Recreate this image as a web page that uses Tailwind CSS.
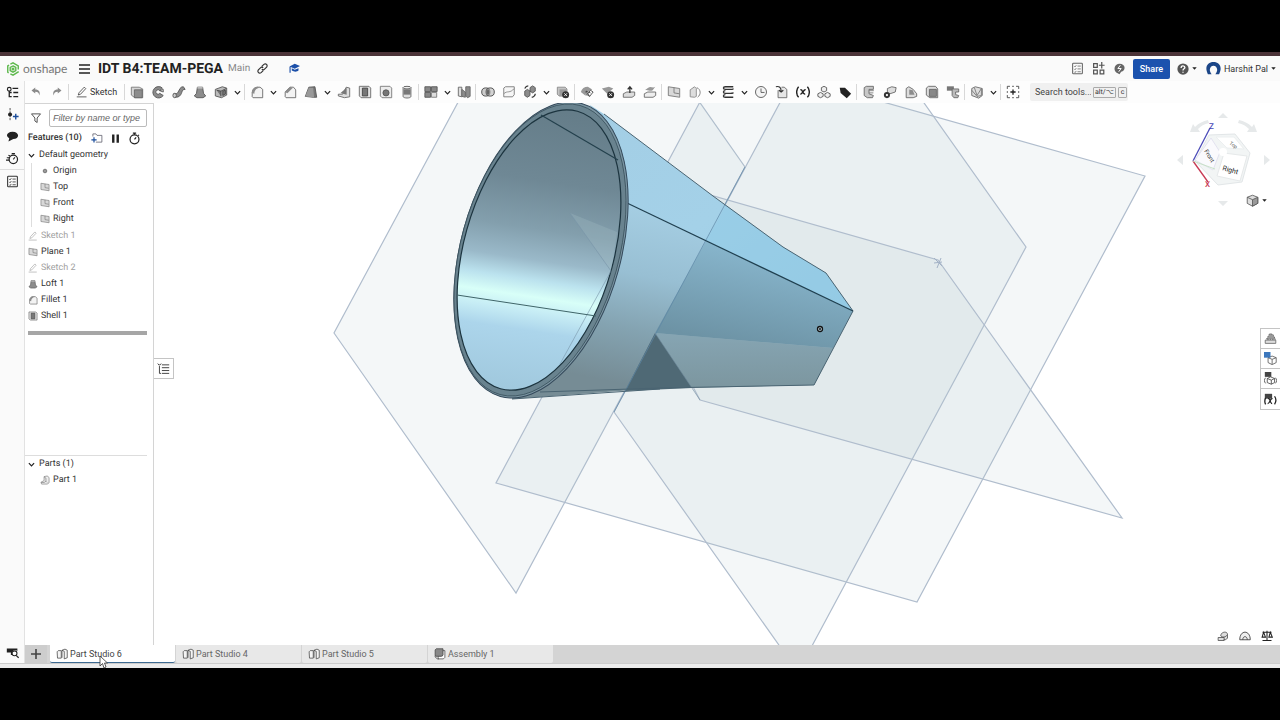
<!DOCTYPE html>
<html lang="en">
<head>
    <meta charset="UTF-8">
    <meta name="viewport" content="width=device-width, initial-scale=1.0">
    <title>IDT B4:TEAM-PEGA | Part Studio 6</title>
    <script src="https://cdn.jsdelivr.net/npm/@tailwindcss/browser@4"></script>
</head>
<body class="bg-black font-['Roboto','Liberation_Sans',sans-serif] text-[#333] text-[9px] leading-4 [text-rendering:geometricPrecision]">

    <!-- Icon sprite, 16x16 each -->
    <svg class="hidden" xmlns="http://www.w3.org/2000/svg">
        <symbol id="undo" viewBox="0 0 16 16"><path d="M7 2 2 6l5 4V7.500c4 0 5 2 5.500 5C14 8 12 4.500 7 4.500z" fill="#8a8a8a"/></symbol>
        <symbol id="redo" viewBox="0 0 16 16"><path d="m9 2 5 4-5 4V7.500c-4 0-5 2-5.500 5C2 8 4 4.500 9 4.500z" fill="#8a8a8a"/></symbol>
        <symbol id="pencil" viewBox="0 0 16 16"><path d="M3 12 4 9l7-7.500 2 2L6 11zM1 14.500h13" fill="none" stroke="currentColor"/></symbol>
        <symbol id="extrude" viewBox="0 0 16 16"><path d="M1.500 2.500h9l4 2v10h-9l-4-3z" fill="#d5d5d5" stroke="#777"/><path d="M5 5.500h9v9H5z" fill="#8c8c8c" stroke="#666"/></symbol>
        <symbol id="revolve" viewBox="0 0 16 16"><path d="M13 3.500A6.500 6.500 0 1 0 14 12l-4-2.500a2.500 2.500 0 1 1 0-3z" fill="#8c8c8c" stroke="#555"/><path d="m10 6.500 4-1.500v3z" fill="#ddd" stroke="#555"/></symbol>
        <symbol id="sweep" viewBox="0 0 16 16"><path d="M2 10c3-1 3 1 5-2s2-6 6-6l2 3c-4 0-3 3-5 6s-4 3-7 3z" fill="#8c8c8c" stroke="#555"/><ellipse cx="3" cy="12" rx="2" ry="2.500" fill="#ccc" stroke="#555"/></symbol>
        <symbol id="loft" viewBox="0 0 16 16"><path d="M5 2.500h6l1 7 2.500 3-3 2h-7l-3-2 2.500-3z" fill="#8c8c8c" stroke="#555"/><path d="M5 2.500h6v1.500H5z" fill="#ccc"/></symbol>
        <symbol id="thicken" viewBox="0 0 16 16"><path d="m1.500 5 8-3 5 1.500v8l-6 3-7-2z" fill="#bbb" stroke="#555"/><path d="m3 6 5 1v6M8 7l6-3M10 7v5l3-1.500V6z" fill="#777" stroke="#444"/></symbol>
        <symbol id="fillet" viewBox="0 0 16 16"><path d="M2.500 13.500V9c0-4 3-6.500 6-6.500h3l3 2.500v9.500h-11z" fill="#f3f3f3" stroke="#666"/><path d="M2 9c0-4 3-7 6.500-7l3 1C8 3 5 5.500 5 10z" fill="#8c8c8c"/></symbol>
        <symbol id="chamfer" viewBox="0 0 16 16"><path d="M2.500 13.500V8L8 2.500h4l2.500 3v9h-11z" fill="#f3f3f3" stroke="#666"/><path d="M2 8 8 2l3 1.500-6 6z" fill="#8c8c8c"/></symbol>
        <symbol id="draft" viewBox="0 0 16 16"><path d="m5.500 2.500 7-.5 2 12h-4l-9-1z" fill="#777" stroke="#555"/><path d="m5.500 3 5 0 1 11-10-1z" fill="#999"/></symbol>
        <symbol id="rib" viewBox="0 0 16 16"><path d="M1.500 10.500h5l4-8 4 1v10l-6 1-7-2z" fill="#ddd" stroke="#666"/><path d="m4 9 7-6v8z" fill="#777"/></symbol>
        <symbol id="shell" viewBox="0 0 16 16"><path d="M1.500 1.500h11l2 2v11h-11l-2-2z" fill="#e4e4e4" stroke="#666"/><path d="M5 3.500h6v9H5z" fill="#777" stroke="#444"/></symbol>
        <symbol id="hole" viewBox="0 0 16 16"><path d="M1.500 1.500h11l2 2v11h-11l-2-2z" fill="#ececec" stroke="#777"/><circle cx="8" cy="9" r="3.500" fill="#777" stroke="#555"/></symbol>
        <symbol id="thread" viewBox="0 0 16 16"><path d="M3.500 3v10c0 2.500 9 2.500 9 0V3" fill="#ddd" stroke="#666"/><path d="M4 5h8v6H4z" fill="#777"/><ellipse cx="8" cy="3" rx="4.500" ry="1.500" fill="#eee" stroke="#555"/></symbol>
        <symbol id="pattern" viewBox="0 0 16 16"><path d="M1 2h6.500v5.500H1zM8.500 2H15v5.500H8.500zM1 8.500h6.500V14H1z" fill="#888" stroke="#555"/><path d="M8.500 8.500h6V14h-6z" fill="#ddd" stroke="#777"/></symbol>
        <symbol id="mirror" viewBox="0 0 16 16"><path d="M1.500 2.500h4v11l-4-1z" fill="#ddd" stroke="#666"/><path d="m5.500 5 4 3v6l-4-1zM10 2h5v11l-3 1.500-2-2z" fill="#8c8c8c" stroke="#666"/></symbol>
        <symbol id="boolean" viewBox="0 0 16 16"><circle cx="5.500" cy="8" r="4.700" fill="#ccc" stroke="#444"/><circle cx="10.500" cy="8" r="4.700" fill="#aaa" fill-opacity=".5" stroke="#444"/><path d="M8 4.500c2 2 2 5 0 7-2-2-2-5 0-7z" fill="#666"/></symbol>
        <symbol id="split" viewBox="0 0 16 16"><path d="m2 3.500 2-1.500h10v9l-2 2.500H2z" fill="#f6f6f6" stroke="#777"/><path d="M2 10c4-4 7 0 12-6" fill="none" stroke="#888"/></symbol>
        <symbol id="transform" viewBox="0 0 16 16"><path d="m2 7 3-2 3 2v5l-3 2-3-2zM8 3l3-2 3 2v4l-3 2-3-2z" fill="#8c8c8c" stroke="#555"/><path d="M2 4c1-2 2-3 4-3m8 9c0 2-2 4-4 4" fill="none" stroke="#333" stroke-width="1.500"/></symbol>
        <symbol id="deletepart" viewBox="0 0 16 16"><path d="M1.500 2.500h9l2 2v8h-9l-2-2z" fill="#c4c4c4" stroke="#888"/><path d="M4 5h8v8H4z" fill="#999"/><circle cx="11" cy="11" r="4" fill="#333"/><path d="m9.500 9.500 3 3m0-3-3 3" stroke="#fff"/></symbol>
        <symbol id="modfillet" viewBox="0 0 16 16"><path d="M1 8c1-4 4-6 8-6l5 3-4 2c-3 0-4 2-4 5z" fill="#999"/><path d="m7 7 4 6m-4-6 5 2m-5-2v5m5-6 3 2-4 5-3-2z" fill="none" stroke="#444"/></symbol>
        <symbol id="deleteface" viewBox="0 0 16 16"><path d="m1 4 8-2 5 2-7 6z" fill="#999"/><circle cx="11" cy="11" r="4" fill="#333"/><path d="m9.500 9.500 3 3m0-3-3 3" stroke="#fff"/></symbol>
        <symbol id="moveface" viewBox="0 0 16 16"><path d="m1.500 10 4-2h9v4l-3 2h-10z" fill="#ddd" stroke="#666"/><path d="M9 9V3M6.500 5 9 2l2.500 3" fill="none" stroke="#333" stroke-width="1.500"/></symbol>
        <symbol id="replaceface" viewBox="0 0 16 16"><path d="m2 6 4-3c3-2 5 1 8-1l-3 4c-3 2-5-1-9 0z" fill="#999"/><path d="m1.500 10 4-2h9v4l-3 2h-10z" fill="#eee" stroke="#666"/></symbol>
        <symbol id="plane" viewBox="0 0 16 16"><path d="m1.500 2 13 2v10l-13-2z" fill="#d8d8d8" stroke="#777"/><path d="M8 3v6l6 1" fill="none" stroke="#777"/></symbol>
        <symbol id="wrap" viewBox="0 0 16 16"><path d="M2.500 13.500v-8l5-3.500 2 2v9l-2 1z" fill="#ddd" stroke="#888"/><path d="M10 3c5 2 5 8 1 11" fill="none" stroke="#777"/></symbol>
        <symbol id="helix" viewBox="0 0 16 16"><path d="M14 2H5C2 2 2 5 5 5h6c3 0 3-1 3-1M5 6.500c-3 0-3 3 0 3h6c3 0 3-1 3-1M5 11c-3 0-3 3 0 3h9" fill="none" stroke="#333" stroke-width="1.500"/></symbol>
        <symbol id="clock" viewBox="0 0 16 16"><circle cx="8" cy="8" r="6.300" fill="#f4f4f4" stroke="#555"/><path d="M8 4v4.500h4" fill="none" stroke="#555"/></symbol>
        <symbol id="derive" viewBox="0 0 16 16"><path d="M3.500 6v8.500h10V5l-3-2.500h-3" fill="#e6e6e6" stroke="#666"/><path d="M1 2c4-1 6 1 6 5M4.500 6 7 8l2.500-2" fill="none" stroke="#333" stroke-width="1.300"/></symbol>
        <symbol id="variable" viewBox="0 0 16 16"><path d="M3 2c-3 3-3 9 0 12M13 2c3 3 3 9 0 12M5 5.500c3-1 2 5 5.500 5M11 5.500c-2.500-1-3 5-6 5" fill="none" stroke="#222" stroke-width="1.600"/></symbol>
        <symbol id="composite" viewBox="0 0 16 16"><path d="m5 3 3-1.500L11 3v3.500L8 8 5 6.500zM1 10l3-1.500L7 10v3l-3 1.500L1 13zM9 10l3-1.500 3 1.500v3l-3 1.500L9 13z" fill="#eee" stroke="#555"/></symbol>
        <symbol id="tag" viewBox="0 0 16 16"><path d="M2 3h6l7 7-5 5-7-6z" fill="#222"/></symbol>
        <symbol id="sheet" viewBox="0 0 16 16"><path d="M2.500 3 5 1.500h8V5H8v5l5 2-1 2.500H6L2.500 12z" fill="#c8c8c8" stroke="#666"/><path d="M8 6.500h5.500M8 9h5" stroke="#777"/></symbol>
        <symbol id="flange" viewBox="0 0 16 16"><path d="m5 4 5-2 5 1-1 5-6 2-3-1z" fill="#ddd" stroke="#666"/><circle cx="4.500" cy="11.500" r="3.500" fill="#333"/><circle cx="4.500" cy="11.500" r="1.300" fill="#fff"/></symbol>
        <symbol id="hem" viewBox="0 0 16 16"><path d="m2.500 4 3-2 5 3 4 5v3l-4 1.500h-8z" fill="#ddd" stroke="#666"/><path d="m6 5 4 1 2 5H6z" fill="#8c8c8c"/></symbol>
        <symbol id="tab" viewBox="0 0 16 16"><path d="M1.500 3.500 4 1.500h8l2.500 3v10h-9l-4-3z" fill="#ddd" stroke="#666"/><path d="M5 5h8v8H5z" fill="#888" stroke="#666"/></symbol>
        <symbol id="bend" viewBox="0 0 16 16"><path d="M1 1.500h8v5H1z" fill="#777"/><path d="M7 4.500h7.500V8H11v3l3.500 1-1 2.500H9L7 12z" fill="#bbb" stroke="#666"/></symbol>
        <symbol id="frame" viewBox="0 0 16 16"><path d="m2 4 4-2 8 2v8l-4 3-8-3z" fill="#ddd" stroke="#666"/><path d="m5 3 3 9 5-8v8l-5 1-6-7" fill="none" stroke="#777"/></symbol>
        <symbol id="addtool" viewBox="0 0 16 16"><path d="M1.500 4.500v-3h3m2.500 0h2m2.500 0h3v3m0 2.500v2m0 2.500v3h-3m-2.500 0H7m-2.500 0h-3v-3m0-2.500V7" fill="none" stroke="#444"/><path d="M8 5v6M5 8h6" stroke="#222" stroke-width="1.500"/></symbol>
        <symbol id="chevron" viewBox="0 0 8 8"><path d="m1 2.500 3 3 3-3" fill="none" stroke="#222" stroke-width="1.400"/></symbol>
        <symbol id="caret" viewBox="0 0 8 8"><path d="M1.500 2.500h5L4 5.500z" fill="#222"/></symbol>
        <symbol id="tree" viewBox="0 0 16 16"><path d="M8 3h7M9 8h6M9 13h6M4 6v7h3M4 8h3" fill="none" stroke="#222" stroke-width="1.600"/><circle cx="4" cy="4" r="2.300" fill="none" stroke="#222" stroke-width="1.400"/></symbol>
        <symbol id="insert" viewBox="0 0 16 16"><path d="M5 0v16" stroke="#333" stroke-dasharray="3 1"/><circle cx="5" cy="8" r="2.500" fill="#222"/><path d="M12 7v7M8.500 10.500h7" stroke="#1b4d9b" stroke-width="1.700"/></symbol>
        <symbol id="comment" viewBox="0 0 16 16"><path d="M8 2c9 0 9 9 1 9l-6 3 1-4C-1 8 1 2 8 2z" fill="#222"/></symbol>
        <symbol id="stopwatch" viewBox="0 0 16 16"><circle cx="8" cy="9" r="5.500" fill="none" stroke="#222" stroke-width="1.500"/><path d="M6 1.500h4M8 1.500v2M12.500 3.500l1 1M8 9l2-2.500" fill="none" stroke="#222" stroke-width="1.500"/></symbol>
        <symbol id="history" viewBox="0 0 16 16"><circle cx="9" cy="9" r="5.200" fill="none" stroke="#222" stroke-width="1.500"/><path d="M7 2h4M1 7h4M0 10h4M9 9l2-2.500M3 4l2 1" fill="none" stroke="#222" stroke-width="1.300"/></symbol>
        <symbol id="checklist" viewBox="0 0 16 16"><rect x="2" y="1.500" width="12" height="13" rx="1" fill="none" stroke="currentColor" stroke-width="1.300"/><path d="M8 5h4M8 8.500h4M8 12h4M4 5l1 1 1.500-2M4 8.500l1 1L6.500 7.500M4 12l1 1 1.500-2" fill="none" stroke="currentColor"/></symbol>
        <symbol id="tabsearch" viewBox="0 0 16 16"><path d="M1 3h13v3c-4-3-8 1-6 5H6V8H1z" fill="#222"/><circle cx="10.500" cy="9" r="3" fill="#fff" stroke="#222" stroke-width="1.300"/><path d="m12.500 11.500 3 3" stroke="#222" stroke-width="1.500"/></symbol>
        <symbol id="funnel" viewBox="0 0 16 16"><path d="M2 2.500h12L9.500 8v6l-3-2V8z" fill="none" stroke="#444" stroke-width="1.200"/></symbol>
        <symbol id="folder" viewBox="0 0 16 16"><path d="M2.500 6V2.500h4l1.500 2h6.500v9h-8" fill="#fff" stroke="#556"/><path d="M4 7v7M.500 10.500h7" stroke="#1b4d9b" stroke-width="1.600"/></symbol>
        <symbol id="pause" viewBox="0 0 16 16"><path d="M3 2h3.500v12H3zM9.500 2H13v12H9.500z" fill="#222"/></symbol>
        <symbol id="part" viewBox="0 0 16 16"><path d="M6.500 2.500 12 1.500l2.500 3v8l-3 2h-9l-1-3L6.500 9z" fill="#eee" stroke="#777"/><path d="m6.500 3 3 2v5l-3 2H2M9.500 10l2 2" fill="none" stroke="#777"/></symbol>
        <symbol id="studio" viewBox="0 0 16 16"><path d="M1.500 5 3 3.500h4v10h-5zM8 3l4-1.500 3 1.500v10l-4 1.500V4.500L8 3v10" fill="#f4f4f4" stroke="#444"/></symbol>
        <symbol id="assembly" viewBox="0 0 16 16"><path d="M5.500 14.500h7l2-2v-9h-3v7h-6z" fill="#fff" stroke="#444"/><path d="M1.500 2.500 3 1h9v8l-2 2H2.500l-1-1.500z" fill="#888" stroke="#444"/><path d="M1.500 10v2l3 2.500h2" fill="none" stroke="#444"/></symbol>
        <symbol id="list" viewBox="0 0 16 16"><path d="M6 3.500h9M6 7h9M6 10.500h9M6 14h9M3 5v9h2" fill="none" stroke="#444" stroke-width="1.200"/><path d="m1 2 2 2 2-2" fill="none" stroke="#222" stroke-width="1.200"/></symbol>
        <symbol id="cube" viewBox="0 0 16 16"><path d="m1.500 4 6.500-2.500L14.500 4v7.500L8 15l-6.500-3.500z" fill="#ddd" stroke="#555"/><path d="M8 7v8l6.500-3.500V4z" fill="#999" stroke="#555"/><path d="M1.500 4 8 7" stroke="#555"/></symbol>
        <symbol id="appearance" viewBox="0 0 16 16"><path d="m3 9 4-7 4 1 3 6z" fill="#999" stroke="#555" stroke-dasharray="2 1"/><path d="M1.500 10h13v4h-13z" fill="#ddd" stroke="#666"/></symbol>
        <symbol id="display" viewBox="0 0 16 16"><path d="m5 7 5-2 5 2v6l-5 2.500L5 13zM5 7l5 2 5-2M10 9v6" fill="#fff" stroke="#555"/><path d="M0 0h8v7H0z" fill="#3d78bd"/></symbol>
        <symbol id="config" viewBox="0 0 16 16"><path d="m4 8 4-2 5 2v5l-4 2-5-2zM2 7c-2 2-2 5 0 7m12-7c2 2 2 5 0 7M4 8l5 2 4-2M9 10v5" fill="none" stroke="#444"/><path d="M1 0h8v6H1z" fill="#444"/></symbol>
        <symbol id="vartable" viewBox="0 0 16 16"><path d="M1 1h9v6H1z" fill="#444"/><path d="M2 6c-1.500 3-1.500 5 0 8m11-10c2 3 2 7 0 10M5 7c3-1 2 6 5 6M10.500 7c-3-1-3 6-6 6" fill="none" stroke="#222" stroke-width="1.600"/></symbol>
        <symbol id="measure" viewBox="0 0 16 16"><path d="M1.500 10h8v4h-8zM5 8c0-6 9-7 9-2v5l-3 2h-2" fill="#ddd" stroke="#444"/><path d="M5 8c2 2 7 2 9-2" fill="none" stroke="#444"/></symbol>
        <symbol id="protractor" viewBox="0 0 16 16"><path d="M1 13C1-.500 15-.500 15 13zM5 13c0-5.500 6-5.500 6 0" fill="#eee" stroke="#444" stroke-width="1.200"/></symbol>
        <symbol id="scale" viewBox="0 0 16 16"><path d="M2 3h12M8 1v13M2 14h12M3.500 3 1.500 9.500h4.500zM12.500 3l-2 6.500h4.500z" fill="none" stroke="#222" stroke-width="1.400"/></symbol>
    </svg>

    <div class="flex min-h-screen flex-col py-[52px]">
        <div class="flex grow flex-col border-t-4 border-[#4b3338] bg-white">

            <!-- Document header -->
            <header class="flex h-[25px] items-center bg-[#fafafa] pl-[6px] pr-[3px]">
                <svg class="size-[14px]" viewBox="0 0 16 16" fill="none" stroke="#5db84c" stroke-width="1.600"><path d="M5 2.500 8 1l6 3.500v4M14.500 11 8 15l-3-1.500M3 12.500l-1-.8V4.500l1.500-1"/><path d="m8 4.500 3.200 1.800v3.500L8 11.600 4.800 9.800V6.300z"/><circle cx="8" cy="8" r="1" /></svg>
                <span class="ml-[3px] w-[43px] text-[12px] text-[#777] font-['Lato',sans-serif]">onshape</span>
                <button class="ml-[13px] w-[11px]" aria-label="Menu"><svg class="w-full" viewBox="0 0 11 10"><path d="M0 1h11M0 5h11M0 9h11" stroke="#222" stroke-width="1.600"/></svg></button>
                <h1 class="ml-2 text-[14px] font-bold text-[#222]">IDT B4:TEAM-PEGA</h1>
                <span class="ml-[5px] text-[10px] text-[#888]">Main</span>
                <button class="ml-[7px]" aria-label="Copy link"><svg class="size-[11px]" viewBox="0 0 16 16" fill="none" stroke="#333" stroke-width="1.700"><path d="m7 5 3-3c3-2 6 1 4 4l-3 3c-1 1-3 1-4 0M9 11l-3 3c-3 2-6-1-4-4l3-3c1-1 3-1 4 0"/></svg></button>
                <button class="ml-[20px]" aria-label="Learning center"><svg class="size-[12px]" viewBox="0 0 16 16" fill="#1b4fa8"><path d="M9 1 16 4 9 7.500 2 4.500zM5 7l4 2 5-2v3c-2 2-6 2-9 0zM2 5h1.500v8H2z"/></svg></button>
                <div class="ml-auto flex items-center">
                    <button class="flex w-[21px] justify-center text-[#666]" aria-label="Tasks"><svg class="size-[13px]"><use href="#checklist"/></svg></button>
                    <button class="flex w-[21px] justify-center" aria-label="Apps"><svg class="size-[13px]" viewBox="0 0 16 16" fill="none" stroke="#555" stroke-width="1.500"><path d="M2 2h4.500v4.500H2zM2 10h4.500v4.500H2zM10 10h4.500v4.500H10zM12 0v8M8.500 4h7"/></svg></button>
                    <button class="flex w-[21px] justify-center" aria-label="Advisor"><svg class="size-[13px]" viewBox="0 0 16 16"><path d="M8 2c8 0 8 9 2 10l-2 3-4-2C0 9 2 2 8 2z" fill="#666"/><path d="m9 4-3 4h4l-3 4" fill="none" stroke="#fff" stroke-width="1.200"/></svg></button>
                    <button class="ml-[3px] h-[20px] w-[37px] rounded-[2px] bg-[#1b52ae] text-[9px] font-medium text-white">Share</button>
                    <button class="ml-[7px] flex items-center gap-[2px]" aria-label="Help">
                        <svg class="size-[12px]" viewBox="0 0 16 16"><circle cx="8" cy="8" r="7.500" fill="#555"/><path d="M5.500 6.500c0-4 5-3 5-.5 0 2-2.500 1.500-2.500 4M8 11.500v1.500" fill="none" stroke="#fff" stroke-width="1.800"/></svg>
                        <svg class="size-[7px]"><use href="#caret"/></svg>
                    </button>
                    <button class="ml-[8px] flex items-center text-[9px]">
                        <svg class="mr-[3px] size-[15px]" viewBox="0 0 16 16"><path d="M2 14C-2 6 2 1 8 1s10 5 6 13l-4 0c4-5 1-9-2-9s-6 4-2 9z" fill="#1b4587"/></svg>
                        <span>Harshit Pal</span>
                        <svg class="ml-[2px] size-[7px]"><use href="#caret"/></svg>
                    </button>
                </div>
            </header>

            <div class="flex grow">
                <!-- Left rail -->
                <nav class="flex w-[25px] shrink-0 flex-col border-r border-[#e2e2e2] bg-[#fafafa] [&>button]:flex [&>button]:h-[22px] [&>button]:items-center [&>button]:justify-center [&_svg]:size-[13px]">
                    <button aria-label="Feature list"><svg><use href="#tree"/></svg></button>
                    <button aria-label="Insert version"><svg><use href="#insert"/></svg></button>
                    <button aria-label="Comments"><svg><use href="#comment"/></svg></button>
                    <button aria-label="History"><svg><use href="#history"/></svg></button>
                    <div class="border-t border-[#ddd]"></div>
                    <button class="text-[#333]" aria-label="Properties"><svg><use href="#checklist"/></svg></button>
                    <button class="mt-auto" aria-label="Tab manager"><svg><use href="#tabsearch"/></svg></button>
                </nav>

                <div class="flex min-w-0 grow flex-col">
                    <!-- Feature toolbar -->
                    <div class="flex h-[22px] items-center bg-[#fdfdfd]" role="toolbar">
                        <button class="flex w-[21px] justify-center" aria-label="Undo"><svg class="size-[12px]"><use href="#undo"/></svg></button>
                        <button class="flex w-[21px] justify-center" aria-label="Redo"><svg class="size-[12px]"><use href="#redo"/></svg></button>
                        <div class="mx-px h-4 w-px bg-[#d8d8d8]"></div>
                        <button class="flex w-[53px] items-center gap-[2px] pl-[6px] text-[9px]"><svg class="size-[12px]"><use href="#pencil"/></svg>Sketch</button>
                        <div class="mx-px h-4 w-px bg-[#d8d8d8]"></div>
                        <div id="tools" class="flex items-center"></div>
                        <label class="ml-[7px] flex h-[18px] w-[98px] items-center gap-[2px] rounded-[2px] bg-[#f0f0f0] pl-[5px]">
                            <input type="text" placeholder="Search tools..." aria-label="Search tools" class="w-[56px] text-[9px] placeholder:text-[#444]">
                            <kbd class="rounded-[1px] border border-[#aaa] px-px font-['Roboto'] text-[7px] leading-[9px]">alt/⌥</kbd>
                            <kbd class="rounded-[1px] border border-[#aaa] px-[2px] font-['Roboto'] text-[7px] leading-[9px]">c</kbd>
                        </label>
                    </div>

                    <div class="flex grow">
                        <!-- Feature tree -->
                        <aside class="flex w-[129px] shrink-0 flex-col border-t border-r border-[#d4d4d4] pr-[6px] pt-[5px] [&_svg]:shrink-0">
                            <div class="flex items-center pl-[5px]">
                                <svg class="size-[12px]"><use href="#funnel"/></svg>
                                <input type="text" placeholder="Filter by name or type" aria-label="Filter by name or type" class="ml-[7px] h-[18px] w-full min-w-0 rounded-[2px] border border-[#bbb] px-[3px] font-['Liberation_Sans',sans-serif] text-[9px] italic placeholder:italic placeholder:text-[#666]">
                            </div>
                            <div class="mt-[2px] flex h-[18px] items-center pl-[3px]">
                                <h2 class="w-[63px] text-[9px] font-medium">Features (10)</h2>
                                <button aria-label="New folder"><svg class="size-[12px]"><use href="#folder"/></svg></button>
                                <button class="ml-[7px]" aria-label="Suspend"><svg class="size-[11px]"><use href="#pause"/></svg></button>
                                <button class="ml-[7px]" aria-label="Rebuild times"><svg class="size-[13px]"><use href="#stopwatch"/></svg></button>
                            </div>
                            <div class="flex h-4 items-center gap-1 pl-[3px]"><svg class="size-[7px]"><use href="#chevron"/></svg>Default geometry</div>
                            <ul class="ml-[6px] border-l border-[#ddd] pl-[8px] [&>li]:flex [&>li]:h-4 [&>li]:items-center [&>li]:gap-[3px] [&_svg]:size-[10px]">
                                <li><svg viewBox="0 0 10 10"><circle cx="5" cy="5" r="1.800" fill="#999" stroke="#777"/></svg>Origin</li>
                                <li><svg><use href="#plane"/></svg>Top</li>
                                <li><svg><use href="#plane"/></svg>Front</li>
                                <li><svg><use href="#plane"/></svg>Right</li>
                            </ul>
                            <ul class="mt-px pl-[3px] [&>li]:flex [&>li]:h-4 [&>li]:items-center [&>li]:gap-[3px] [&_svg]:size-[10px]">
                                <li class="text-[#a0a0a0]"><svg><use href="#pencil"/></svg>Sketch 1</li>
                                <li><svg><use href="#plane"/></svg>Plane 1</li>
                                <li class="text-[#a0a0a0]"><svg><use href="#pencil"/></svg>Sketch 2</li>
                                <li><svg><use href="#loft"/></svg>Loft 1</li>
                                <li><svg><use href="#fillet"/></svg>Fillet 1</li>
                                <li><svg><use href="#shell"/></svg>Shell 1</li>
                            </ul>
                            <div class="ml-[3px] mt-[7px] h-1 bg-[#a6a6a6]"></div>
                            <div class="mt-auto h-[190px] border-t border-[#ddd]">
                                <div class="flex h-4 items-center gap-1 pl-[3px]"><svg class="size-[7px]"><use href="#chevron"/></svg>Parts (1)</div>
                                <div class="flex h-4 items-center gap-[3px] pl-[15px]"><svg class="size-[10px]"><use href="#part"/></svg>Part 1</div>
                            </div>
                        </aside>

                        <!-- Graphics area -->
                        <main class="relative grow overflow-hidden bg-white">
                            <svg class="absolute inset-0 size-full" viewBox="154 103 1126 542" preserveAspectRatio="xMidYMid slice">
                                <defs>
                                    <linearGradient id="inside" gradientUnits="userSpaceOnUse" x1="560" y1="112" x2="518" y2="392" gradientTransform="rotate(-15.500 539 250)">
                                        <stop offset="0" stop-color="#657d89"/>
                                        <stop offset=".25" stop-color="#6f8895"/>
                                        <stop offset=".42" stop-color="#839fad"/>
                                        <stop offset=".53" stop-color="#9ab9c9"/>
                                        <stop offset=".6" stop-color="#bbe2ee"/>
                                        <stop offset=".66" stop-color="#d8fff8"/>
                                        <stop offset=".71" stop-color="#c7edf5"/>
                                        <stop offset=".78" stop-color="#acd5eb"/>
                                        <stop offset="1" stop-color="#a0c8dd"/>
                                    </linearGradient>
                                    <linearGradient id="side" gradientUnits="userSpaceOnUse" x1="690" y1="210" x2="655" y2="390">
                                        <stop offset="0" stop-color="#a6cfe4"/>
                                        <stop offset=".4" stop-color="#98bfd3"/>
                                        <stop offset=".7" stop-color="#84a3b1"/>
                                        <stop offset="1" stop-color="#768c95"/>
                                    </linearGradient>
                                    <linearGradient id="sidefar" gradientUnits="userSpaceOnUse" x1="760" y1="250" x2="740" y2="345">
                                        <stop offset="0" stop-color="#88b6cd"/>
                                        <stop offset="1" stop-color="#6d93a5"/>
                                    </linearGradient>
                                    <linearGradient id="sidelow" x1="0" y1="0" x2="0" y2="1">
                                        <stop offset="0" stop-color="#86a5b3"/>
                                        <stop offset="1" stop-color="#7c969f"/>
                                    </linearGradient>
                                    <linearGradient id="top" x1="0" y1="0" x2="1" y2="1">
                                        <stop offset="0" stop-color="#a3cee5"/>
                                        <stop offset=".5" stop-color="#a4d1e8"/>
                                        <stop offset="1" stop-color="#9acbe3"/>
                                    </linearGradient>
                                </defs>
                                <!-- reference planes -->
                                <g fill="#b0c6d0" fill-opacity=".14" stroke="#b0bdcd" stroke-width="1.200">
                                    <path d="M334 333 516 593 745 167 563-93z"/>
                                    <path d="M496 483 917 602 1145 176 724 57z"/>
                                    <path d="M614 412 798 672 1026 247 842-13z"/>
                                    <path d="M700 400 1122 518 938 260 570 155z"/>
                                </g>
                                <path d="m934 258 8 8m-1-8-4 10m-3-5 8-1" stroke="#a3b2c6" fill="none"/>
                                <!-- outer faces -->
                                <path d="M590 105 604 114 713 196 783 247 826 273 853 311 627 203z" fill="url(#top)"/>
                                <path d="M627 203 853 311 814 385 660 388 512 399 560 300z" fill="url(#side)"/>
                                <path d="M706 241 853 311 833 348 655 333z" fill="url(#sidefar)"/>
                                <path d="M706 241 726 205 783 247 826 273 853 311z" fill="#8ec9e6" fill-opacity=".5"/>
                                <path d="M655 333 833 348 814 385 692 388z" fill="url(#sidelow)"/>
                                <path d="M655 333 692 388 625 391z" fill="#4f6975"/>
                                <path d="M745 167 614 412" stroke="#5c86a5" stroke-opacity=".7"/>
                                <path d="M655 333 700 400" stroke="#6f8a9c" stroke-opacity=".6"/>
                                <path d="M604 114 713 196 783 247 826 273 853 311 814 385 660 388 540 392M512 399 660 389" fill="none" stroke="#4a6472"/>
                                <path d="M627 203 853 311" stroke="#1f3f4f" stroke-width="1.200"/>
                                <!-- rim -->
                                <ellipse cx="541" cy="250" rx="80" ry="152" transform="rotate(15.500 541 250)" fill="#7b95a2" stroke="#34495a"/>
                                <ellipse cx="540" cy="250" rx="79" ry="150" transform="rotate(15.500 540 250)" fill="#69838f" stroke="#3a525e" stroke-width=".800"/>
                                <ellipse cx="539" cy="250" rx="75" ry="144" transform="rotate(15.500 539 250)" fill="url(#inside)" stroke="#1c343f" stroke-width="1.200"/>
                                <path d="M570 213 617 232 611 271z" fill="#9fb6c1" fill-opacity=".35"/>
                                <path d="M570 213 611 271 560 364" fill="none" stroke="#7895a8" stroke-opacity=".6"/>
                                <path d="m541 115 77 45" stroke="#23404c" stroke-width="1.200"/>
                                <path d="m457 295 139 21" stroke="#3f6468"/>
                                <circle cx="820" cy="329" r="2.500" fill="#c4dbe5" stroke="#111" stroke-width="1.300"/>
                                <circle cx="820" cy="329" r="1" fill="#111"/>
                            </svg>

                            <button class="absolute left-[-1px] top-[255px] flex h-[21px] w-[21px] items-center justify-center border border-[#c4c4c4] bg-white" aria-label="Toggle feature list"><svg class="size-[13px]"><use href="#list"/></svg></button>

                            <!-- View cube -->
                            <svg class="absolute right-[10px] top-[7px] h-[100px] w-[94px]" viewBox="1176 110 94 100">
                                <g fill="#e6e9ea">
                                    <path d="m1223 113 5 5h-10zM1223 206l5-5h-10zM1177 160l6-5v10zM1270 160l-6-5v10z"/>
                                    <path d="m1190 132 3-8 2 3c4-4 8-6 13-7l1 3c-5 1-8 3-11 6l2 3zM1257 132l-3-8-2 3c-4-4-8-6-13-7l-1 3c5 1 8 3 11 6l-2 3z"/>
                                </g>
                                <path d="m1209 135 26-1 15 19-8 29-24 3-23-24z" fill="#f2f5f5" stroke="#e2e6e8"/>
                                <path d="m1211 138 9 14-7 18-18-10z" fill="#fafafd" stroke="#e3e3f0"/>
                                <path d="m1224 153 23 3-7 25-23-5z" fill="#fff" stroke="#e6e9ea"/>
                                <path d="m1216 137 18 0 10 12-17-1z" fill="#fff" stroke="#eceff0"/>
                                <circle cx="1223" cy="152" r="4" fill="#fff"/>
                                <path d="m1193 161 17-33" stroke="#4a4ab8" stroke-width="1.300"/>
                                <path d="m1193 161 15 21" stroke="#c83a54" stroke-width="1.300"/>
                                <path d="m1193 161 22 8" stroke="#c8e2c8"/>
                                <g font-family="Roboto">
                                    <text x="1209" y="129" font-size="8" font-weight="500" fill="#4a4ab8">Z</text>
                                    <text x="1205" y="187" font-size="8" font-weight="500" fill="#c83a54">X</text>
                                    <text x="1222" y="170" font-size="7" fill="#222" transform="rotate(16 1222 170)">Right</text>
                                    <text x="1204" y="151" font-size="6" fill="#333" transform="rotate(58 1204 151)">Front</text>
                                    <text x="1229" y="144" font-size="5" fill="#555" transform="rotate(35 1229 144)">Top</text>
                                </g>
                            </svg>
                            <button class="absolute right-[12px] top-[91px] flex items-center gap-[2px]" aria-label="View options"><svg class="size-[13px]"><use href="#cube"/></svg><svg class="size-[7px]"><use href="#caret"/></svg></button>

                            <div class="absolute right-0 top-[225px] w-[20px] divide-y divide-[#c4c4c4] border border-r-0 border-[#c4c4c4] bg-white [&>button]:flex [&>button]:h-[20px] [&>button]:w-full [&>button]:items-center [&>button]:justify-center [&_svg]:size-[13px]">
                                <button aria-label="Appearances"><svg><use href="#appearance"/></svg></button>
                                <button aria-label="Display states"><svg><use href="#display"/></svg></button>
                                <button aria-label="Configurations"><svg><use href="#config"/></svg></button>
                                <button aria-label="Variable table"><svg><use href="#vartable"/></svg></button>
                            </div>

                            <div class="absolute bottom-[3px] right-[7px] flex gap-[10px] [&_svg]:size-[12px]">
                                <button aria-label="Measure"><svg><use href="#measure"/></svg></button>
                                <button aria-label="Angle"><svg><use href="#protractor"/></svg></button>
                                <button aria-label="Mass properties"><svg><use href="#scale"/></svg></button>
                            </div>
                        </main>
                    </div>

                    <!-- Document tabs -->
                    <footer class="flex h-[18px] items-stretch bg-[#d4d4d4] [&_svg]:shrink-0">
                        <button class="mr-[3px] flex w-[22px] items-center justify-center bg-[#cdcdcd]" aria-label="Insert new tab"><svg class="size-[10px]" viewBox="0 0 10 10"><path d="M5 0v10M0 5h10" stroke="#444" stroke-width="1.600"/></svg></button>
                        <div class="flex gap-px text-[#666] [&>button]:flex [&>button]:w-[125px] [&>button]:items-center [&>button]:gap-[2px] [&>button]:rounded-b-[2px] [&>button]:pl-[6px]">
                            <button class="relative border-b border-[#3d6a92] bg-white text-[#444]">
                                <svg class="size-[12px]"><use href="#studio"/></svg>Part Studio 6
                                <svg class="absolute left-[49px] top-[10px] z-10 h-[14px] w-[9px]" viewBox="0 0 9 14"><path d="M1 1v10l2.500-2.500L5 13l2-1-1.500-4H8.500z" fill="#fff" stroke="#333" stroke-width=".800"/></svg>
                            </button>
                            <button class="bg-[#e8e8e8]"><svg class="size-[12px]"><use href="#studio"/></svg>Part Studio 4</button>
                            <button class="bg-[#e8e8e8]"><svg class="size-[12px]"><use href="#studio"/></svg>Part Studio 5</button>
                            <button class="bg-[#e8e8e8]"><svg class="size-[12px]"><use href="#assembly"/></svg>Assembly 1</button>
                        </div>
                    </footer>
                </div>
            </div>
            <div class="h-[5px] border-t border-[#ccc] bg-[#ececec]"></div>
        </div>
    </div>

    <script>
        // "v" is a drop-down arrow, "|" a divider, anything else an icon id
        const tools = ('extrude revolve sweep loft thicken v | fillet v chamfer draft v rib shell hole thread | ' +
            'pattern v mirror | boolean split transform v deletepart | modfillet deleteface moveface replaceface | ' +
            'plane wrap v helix v clock derive variable composite tag | sheet flange hem tab bend | frame v | addtool').split(' ');

        document.getElementById('tools').innerHTML = tools.map((t) => {
            if (t === '|') return '<div class="mx-px h-4 w-px bg-[#d8d8d8]"></div>';
            if (t === 'v') return '<button class="flex w-[12px] justify-center" aria-label="More"><svg class="size-[7px]"><use href="#chevron"/></svg></button>';
            return `<button class="flex w-[21px] justify-center" aria-label="${t}"><svg class="size-[14px]"><use href="#${t}"/></svg></button>`;
        }).join('');
    </script>
</body>
</html>
